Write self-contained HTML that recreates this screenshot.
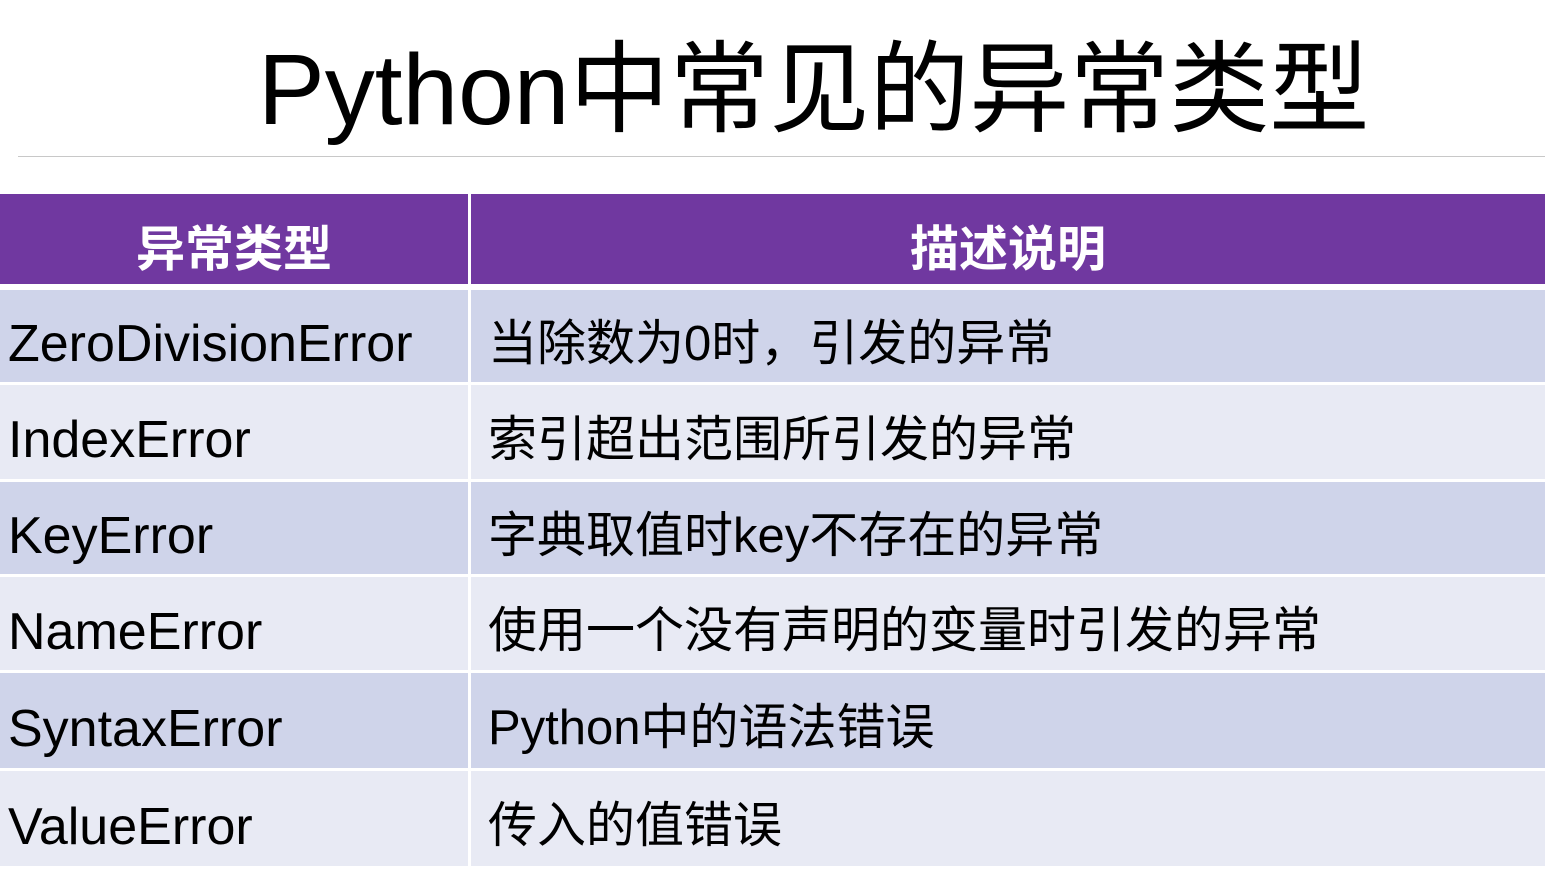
<!DOCTYPE html>
<html><head><meta charset="utf-8"><style>
html,body{margin:0;padding:0;background:#fff;}
body{width:1545px;height:869px;position:relative;overflow:hidden;font-family:"Liberation Sans","Noto Sans CJK SC",sans-serif;color:#000;}
.title{position:absolute;left:258px;top:30px;font-size:100px;line-height:120px;white-space:nowrap;}
.line{position:absolute;left:18px;top:156px;width:1527px;height:1px;background:#c8c8c8;}
.cell{position:absolute;box-sizing:border-box;white-space:nowrap;}
.h{background:#7038a0;color:#fff;font-weight:bold;font-size:49px;text-align:center;top:194px;height:90px;line-height:112px;}
.r{font-size:52px;padding-left:8px;padding-top:16px;line-height:1;display:flex;align-items:center;}
.d{background:#cfd4ea;}
.l{background:#e8eaf4;}
.c2{font-size:49px;padding-left:17px;}
</style></head><body>
<div class="title">Python中常见的异常类型</div>
<div class="line"></div>
<div class="cell h" style="left:0;width:468px;">异常类型</div>
<div class="cell h" style="left:471px;width:1074px;">描述说明</div>

<div class="cell r d" style="left:0;width:468px;top:290px;height:92px;">ZeroDivisionError</div>
<div class="cell r d c2" style="left:471px;width:1074px;top:290px;height:92px;">当除数为0时，引发的异常</div>

<div class="cell r l" style="left:0;width:468px;top:385px;height:94px;">IndexError</div>
<div class="cell r l c2" style="left:471px;width:1074px;top:385px;height:94px;">索引超出范围所引发的异常</div>

<div class="cell r d" style="left:0;width:468px;top:482px;height:92px;">KeyError</div>
<div class="cell r d c2" style="left:471px;width:1074px;top:482px;height:92px;">字典取值时key不存在的异常</div>

<div class="cell r l" style="left:0;width:468px;top:577px;height:93px;">NameError</div>
<div class="cell r l c2" style="left:471px;width:1074px;top:577px;height:93px;">使用一个没有声明的变量时引发的异常</div>

<div class="cell r d" style="left:0;width:468px;top:673px;height:95px;">SyntaxError</div>
<div class="cell r d c2" style="left:471px;width:1074px;top:673px;height:95px;">Python中的语法错误</div>

<div class="cell r l" style="left:0;width:468px;top:771px;height:95px;">ValueError</div>
<div class="cell r l c2" style="left:471px;width:1074px;top:771px;height:95px;">传入的值错误</div>
</body></html>
